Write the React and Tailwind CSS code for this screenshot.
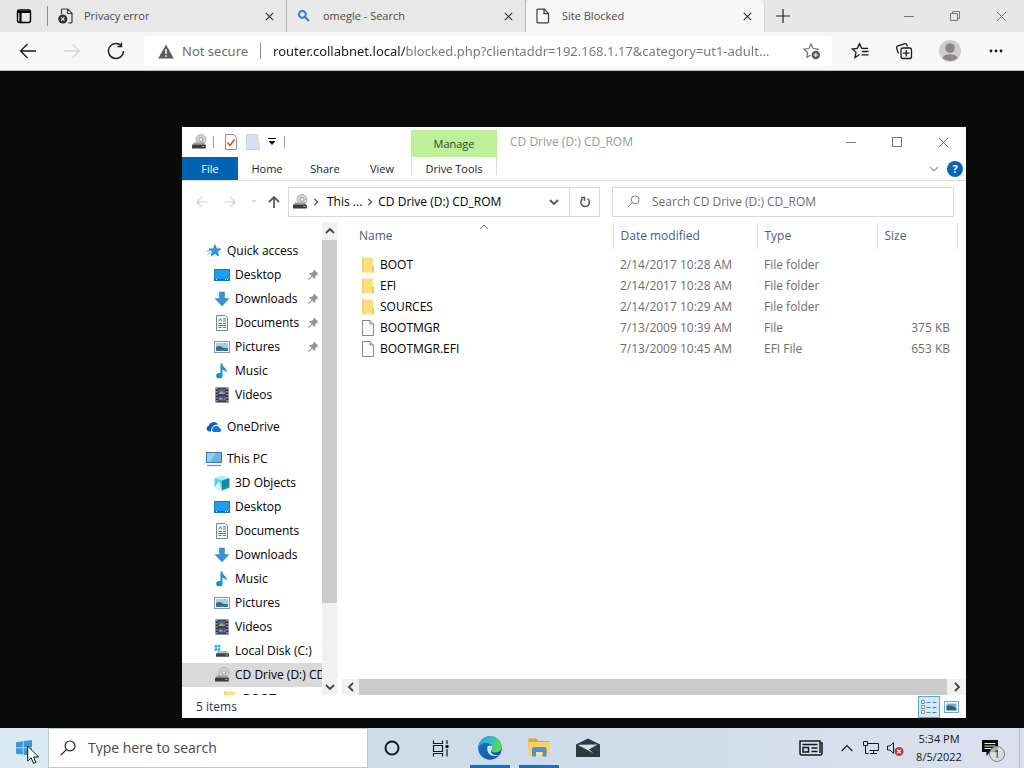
import clsx from "clsx";

/* ---------- icons ---------- */

function Stroke({ size = 16, width = 1, className, children }) {
  return (
    <svg
      width={size}
      height={size}
      viewBox={`0 0 ${size} ${size}`}
      fill="none"
      stroke="currentColor"
      strokeWidth={width}
      className={clsx("shrink-0", className)}
      aria-hidden="true"
    >
      {children}
    </svg>
  );
}

function CloseIcon({ size = 10, width = 1 }) {
  return (
    <Stroke size={size} width={width}>
      <path d={`M.8 .8 L${size - 0.8} ${size - 0.8} M${size - 0.8} .8 L.8 ${size - 0.8}`} />
    </Stroke>
  );
}

function Chevron({ dir = "down", width = 1.5, className }) {
  const paths = {
    down: "M1 3l4 4 4-4",
    up: "M1 7l4-4 4 4",
    left: "M7 1L3 5l4 4",
    right: "M3 1l4 4-4 4",
  };
  return (
    <Stroke size={10} width={width} className={className}>
      <path d={paths[dir]} />
    </Stroke>
  );
}

function PageIcon() {
  return (
    <Stroke size={16} width={1.2} className="text-[#3b3b3b]">
      <path d="M2 1.2h6.3l4.200 4.200v8.400a1 1 0 0 1-1 1H2a1 1 0 0 1-1-1V2.200a1 1 0 0 1 1-1zM8 1.200v4.500h4.500" />
    </Stroke>
  );
}

function ErrorPageIcon() {
  return (
    <Stroke size={16} width={1.2} className="text-[#3b3b3b]">
      <path d="M3.5 6V2a1 1 0 0 1 1-1h5.3L14 5.2v8.6a1 1 0 0 1-1 1h-2.5M9.5 1v4.5H14" />
      <circle cx="4.8" cy="11" r="4.6" fill="#333" stroke="none" />
      <path d="M3.2 9.4l3.2 3.2M6.4 9.4l-3.2 3.2" stroke="#e8e8e8" />
    </Stroke>
  );
}

function BingSearchIcon() {
  return (
    <Stroke size={16} width={2} className="text-[#2f7fd0]">
      <circle cx="5.4" cy="6.4" r="3.4" />
      <path d="M8 9l4 4" />
    </Stroke>
  );
}

function DriveIcon() {
  return (
    <svg width="16" height="16" viewBox="0 0 16 16" className="shrink-0" aria-hidden="true">
      <circle cx="10" cy="5.5" r="5" fill="#d4d4d4" stroke="#a3a3a3" strokeWidth=".8" />
      <circle cx="10" cy="5.5" r="2" fill="#f5f5f5" stroke="#8d8d8d" strokeWidth=".8" />
      <path d="M3 8.5h10l1.6 2.5H1.2z" fill="#9a9a9a" />
      <rect x="1" y="10.8" width="13.8" height="3.6" rx=".5" fill="#3c3c3c" />
      <rect x="11.4" y="12" width="2" height="1" fill="#8fd08a" />
    </svg>
  );
}

function LocalDiskIcon() {
  return (
    <svg width="16" height="16" viewBox="0 0 16 16" className="shrink-0" aria-hidden="true">
      <path d="M.5 2h2.6v2.6H.5zM3.7 2h2.6v2.6H3.7zM.5 5.2h2.6v2.6H.5zM3.7 5.2h2.6v2.6H3.7z" fill="#1fb4d6" />
      <path d="M4 8h9l1.8 2.5H2.4z" fill="#b9bcbc" />
      <rect x="2" y="10.2" width="13" height="3.6" rx=".5" fill="#444" />
      <rect x="11.6" y="11.4" width="2" height="1" fill="#7be07b" />
    </svg>
  );
}

function StarIcon() {
  return (
    <svg width="16" height="16" viewBox="0 0 16 16" className="shrink-0" aria-hidden="true">
      <path d="M9 1.5l1.6 4.2 4.4.2-3.4 2.8 1.2 4.4L9 10.6l-4 2.5 1.3-4.4L3 5.9l4.4-.2z" fill="#2e9be6" stroke="#1c74b8" strokeWidth=".6" />
      <path d="M1 8.5l3-.8M1.5 11.5l3-1.8" stroke="#57aee8" strokeWidth="1" />
    </svg>
  );
}

function DesktopIcon() {
  return (
    <svg width="16" height="16" viewBox="0 0 16 16" className="shrink-0" aria-hidden="true">
      <rect x=".5" y="2.5" width="15" height="11" fill="#1e9df7" stroke="#1877bd" />
      <path d="M1 12.5h14" stroke="#1467a8" />
      <path d="M2 12.5h1M11 12.5h1M13 12.5h1" stroke="#d8efff" />
    </svg>
  );
}

function DownloadIcon() {
  return (
    <svg width="16" height="16" viewBox="0 0 16 16" className="shrink-0" aria-hidden="true">
      <path d="M5.500 1h5v6.500h4.500L8 15 1 7.500h4.500z" fill="#3b8fd2" stroke="#2f7ab8" strokeWidth=".5" />
    </svg>
  );
}

function DocumentIcon() {
  return (
    <svg width="16" height="16" viewBox="0 0 16 16" className="shrink-0" aria-hidden="true">
      <path d="M2.500 .5h8.500l2.500 2.500v12.500h-11z" fill="#fbfcfc" stroke="#75868e" />
      <path d="M4.500 6.500l2-3 1 3M9 4h3M9 6h3M4.500 8.500h3.500M9 8.500h3M4.500 10.500h7.500M4.500 12.500h3M9 12.500h3" stroke="#3a80a8" fill="none" />
    </svg>
  );
}

function PictureIcon() {
  return (
    <svg width="16" height="16" viewBox="0 0 16 16" className="shrink-0" aria-hidden="true">
      <rect x=".5" y="2.500" width="15" height="11" fill="#fff" stroke="#8a979e" />
      <rect x="2" y="4" width="12" height="8" fill="#a5cdf2" />
      <path d="M2 8q3-2 6 0t6 1v3H2z" fill="#47647c" />
      <path d="M2 10.500q6-1 12 .5v1H2z" fill="#2f7ca8" />
    </svg>
  );
}

function MusicIcon() {
  return (
    <svg width="16" height="16" viewBox="0 0 16 16" className="shrink-0" aria-hidden="true">
      <path d="M7.500 .5v12" stroke="#1a8fd4" strokeWidth="2" />
      <path d="M7.500 .5c.5 3.500 6.500 4.500 4.800 9.500-.4-2.300-2.800-3.300-4.800-3.600z" fill="#1a8fd4" />
      <ellipse cx="5.300" cy="12.700" rx="3.200" ry="2.600" fill="#1a8fd4" />
    </svg>
  );
}

function VideoIcon() {
  return (
    <svg width="16" height="16" viewBox="0 0 16 16" className="shrink-0" aria-hidden="true">
      <rect x="1.500" y=".5" width="13" height="15" fill="#2f2f33" />
      <path d="M3 1v14M13 1v14" stroke="#e5e5e5" strokeDasharray="1.500 1.500" />
      <rect x="4.500" y="1.500" width="7" height="6" fill="#55638f" />
      <rect x="4.500" y="8.500" width="7" height="6" fill="#4652a8" />
      <path d="M4.500 7l2.500-3 2 2 1-1 1.500 2zM4.500 12l2 -1.500 3 2 2-2v2h-7z" fill="#c3ad4c" />
    </svg>
  );
}

function OneDriveIcon() {
  return (
    <svg width="16" height="16" viewBox="0 0 16 16" className="shrink-0" aria-hidden="true">
      <path d="M3 12.500a3 3 0 0 1-.3-5.800A5.200 5.200 0 0 1 12 5.500c-4 .3-6 2.500-6.500 7z" fill="#0f5fb8" />
      <path d="M7 13a3 3 0 0 1 .6-5 3.800 3.800 0 0 1 6.200 1.200A2 2 0 0 1 14 13z" fill="#1278d4" />
      <path d="M5.800 12.500c-.8-3.500 1-6 4.500-6.300" stroke="#fff" strokeWidth=".9" fill="none" />
    </svg>
  );
}

function ComputerIcon() {
  return (
    <svg width="16" height="16" viewBox="0 0 16 16" className="shrink-0" aria-hidden="true">
      <rect x=".5" y="1.500" width="15" height="10" fill="#5fb8f2" stroke="#4a7898" />
      <path d="M1 2h9L4 11H1z" fill="#8fd0f8" />
      <path d="M1 14.500h14" stroke="#7d8c95" strokeWidth="1.200" />
    </svg>
  );
}

function CubeIcon() {
  return (
    <svg width="16" height="16" viewBox="0 0 16 16" className="shrink-0" aria-hidden="true">
      <path d="M.5 3L8 .5 15.500 3 8 5.500z" fill="#a8eaf2" />
      <path d="M.5 3L8 5.500v10l-7.500-3z" fill="#56cfe0" />
      <path d="M8 5.500L15.500 3v9.500l-7.500 3z" fill="#0f8fa8" />
      <path d="M.5 12.500l4.500-6.500 3 9.500z" fill="#d8f3e6" />
    </svg>
  );
}

function FolderIcon() {
  return (
    <svg width="14" height="16" viewBox="0 0 14 16" className="shrink-0" aria-hidden="true">
      <path d="M1 .5h11v15H1z" fill="#fbdf83" />
      <path d="M1 .5h1.500v15H1z" fill="#f5d06a" />
      <path d="M11 15.500V9.500l2-.8v6.800z" fill="#f2c84f" />
    </svg>
  );
}

function FileIcon() {
  return (
    <svg width="14" height="16" viewBox="0 0 14 16" className="shrink-0" aria-hidden="true">
      <path d="M1.500 .5h7.500l3.500 3.500v11.500h-11z" fill="#fdfdfd" stroke="#85898c" />
      <path d="M9 .5v3.500h3.500" fill="none" stroke="#85898c" />
    </svg>
  );
}

function PinIcon() {
  return (
    <svg width="12" height="12" viewBox="0 0 12 12" className="shrink-0" aria-hidden="true">
      <path d="M7 .5l4.500 4.500-1.600.5-1.700 1.900-.1 2.800L5.200 7.500 1.200 11.400l-.6-.6L4.500 6.800 1.800 4.100l2.900-.2 1.800-1.700z" fill="#8d9499" />
    </svg>
  );
}

function SearchIcon({ size = 14, className }) {
  return (
    <svg width={size} height={size} viewBox="0 0 14 14" fill="none" stroke="currentColor" className={className} aria-hidden="true">
      <circle cx="8.800" cy="5.200" r="4.300" />
      <path d="M5.700 8.300L.7 13.300" />
    </svg>
  );
}

function EdgeIcon() {
  return (
    <svg width="24" height="24" viewBox="0 0 24 24" aria-hidden="true">
      <defs>
        <linearGradient id="edgeTop" x1="0" y1="0" x2="1" y2="0.4">
          <stop offset="0" stopColor="#1c9bdc" />
          <stop offset=".55" stopColor="#35c1c4" />
          <stop offset="1" stopColor="#5fd45a" />
        </linearGradient>
        <linearGradient id="edgeBottom" x1="0" y1="0" x2="1" y2="1">
          <stop offset="0" stopColor="#1579cf" />
          <stop offset="1" stopColor="#114f9e" />
        </linearGradient>
      </defs>
      <circle cx="12" cy="12" r="11.800" fill="url(#edgeBottom)" />
      <path d="M.3 11.500C1 5 6 .2 12.200.2 18.500.2 23.800 5 23.800 10.800c0 3.500-2.800 5.700-6.200 5.700-3 0-4.600-1.200-3.900-2.300.5-.8.8-1.500.8-2.500C14.500 9 11.500 7 8.300 7 4.500 7 1.500 9 .3 11.500z" fill="url(#edgeTop)" />
      <path d="M9.200 12c-.3 5 3.800 8.800 9.300 7.900 1.600-.3 3-1 3.800-1.600-1.300.8-2.500 1-4 .9-4-.2-6.300-2.700-5-5 .8-1.400 1.400-2.300.9-3.600-1.700-1.700-4.800-1.200-5 1.400z" fill="#d7edf5" />
    </svg>
  );
}

function ExplorerIcon() {
  return (
    <svg width="24" height="24" viewBox="0 0 24 24" aria-hidden="true">
      <path d="M1.500 2.500h8l2 2.500H22v6H1.500z" fill="#e3a32e" />
      <path d="M1.500 6H20.500a2 2 0 0 1 2 2v12h-21z" fill="#fbd164" />
      <path d="M5 20.500v-7.500a2 2 0 0 1 2-2h10.500a2 2 0 0 1 2 2v7.500h-4V16h-6.500v4.500z" fill="#4a94c8" />
      <path d="M9 16h6.500v3H9z" fill="#fde28e" />
    </svg>
  );
}

function MailIcon() {
  return (
    <svg width="24" height="20" viewBox="0 0 24 20" aria-hidden="true">
      <path d="M0 6.500L12 .5l12 6V19H0z" fill="#2e3a42" />
      <path d="M1.500 6.800L21.500 6.500 13 11.500l4.500 3.800z" fill="#d4e0e9" />
    </svg>
  );
}

/* ---------- browser ---------- */

function BrowserTab({ title, icon, active }) {
  return (
    <div
      className={clsx(
        "flex h-8 w-[239px] min-w-0 shrink items-center border-r pl-2.5 pr-3",
        active ? "rounded-t-sm border-[#d5d5d5] bg-[#f7f7f7]" : "border-[#b5b5b5] bg-[#e8e8e8]"
      )}
    >
      <button className="flex min-w-0 flex-1 items-center gap-2.5 text-left text-[#4a4a4a]">
        {icon}
        <span className="truncate">{title}</span>
      </button>
      <button aria-label={`Close ${title}`} className="text-[#333]">
        <CloseIcon size={9} width={1.2} />
      </button>
    </div>
  );
}

function TabStrip() {
  return (
    <div className="flex h-8 items-center bg-[#e7e7e7] text-[11px]">
      <button aria-label="Tab actions" className="flex h-5 w-12 items-center justify-center border-r border-[#8d8d8d] text-black">
        <Stroke size={16} width={1.4}>
          <rect x="1.500" y="2" width="13" height="12.500" rx="2" />
          <path d="M1.500 4h13M4.500 5v9" strokeWidth="2.200" />
        </Stroke>
      </button>
      <BrowserTab title="Privacy error" icon={<ErrorPageIcon />} />
      <BrowserTab title="omegle - Search" icon={<BingSearchIcon />} />
      <BrowserTab title="Site Blocked" icon={<PageIcon />} active />
      <button aria-label="New tab" className="flex h-8 w-9 items-center justify-center text-[#222]">
        <Stroke size={14} width={1.2}>
          <path d="M7 0v14M0 7h14" />
        </Stroke>
      </button>
      <div className="ml-auto flex text-[#777]">
        <button aria-label="Minimize browser" className="flex h-7 w-[46px] items-center justify-center">
          <Stroke size={10}>
            <path d="M0 5.500h10" />
          </Stroke>
        </button>
        <button aria-label="Restore browser" className="flex h-7 w-[46px] items-center justify-center">
          <Stroke size={10}>
            <path d="M.5 2.500h7v7h-7zM2.500 2.500v-2h7v7h-2" />
          </Stroke>
        </button>
        <button aria-label="Close browser" className="flex h-7 w-[46px] items-center justify-center">
          <CloseIcon size={11} />
        </button>
      </div>
    </div>
  );
}

function ToolButton({ label, className, children }) {
  return (
    <button aria-label={label} className={clsx("flex h-8 w-11 shrink-0 items-center justify-center", className)}>
      {children}
    </button>
  );
}

function Toolbar() {
  return (
    <div className="flex h-[39px] items-center border-b border-[#bdbdbd] bg-[#f7f7f7] px-1.5 text-[#1b1b1b]">
      <ToolButton label="Back">
        <Stroke size={18} width={1.3}>
          <path d="M17 9H1.500M8.500 2l-7 7 7 7" />
        </Stroke>
      </ToolButton>
      <ToolButton label="Forward" className="text-[#d3d3d3]">
        <Stroke size={18} width={1.3}>
          <path d="M1 9h15.500M9.500 2l7 7-7 7" />
        </Stroke>
      </ToolButton>
      <ToolButton label="Refresh">
        <Stroke size={18} width={1.4}>
          <path d="M16.500 9a7.500 7.500 0 1 1-2.600-5.700M14.500 .5v4h-4" />
        </Stroke>
      </ToolButton>
      <div className="mx-1.5 flex h-[30px] min-w-0 flex-1 items-center rounded bg-white pl-3.5 font-['Noto_Sans','Open_Sans',sans-serif] text-[13px]">
        <svg width="16" height="15" viewBox="0 0 16 15" className="shrink-0" aria-hidden="true">
          <path d="M8 .5l7.800 14H.2z" fill="#5c5c5c" />
          <path d="M8 5v5M8 11.300v1.500" stroke="#fff" strokeWidth="1.500" />
        </svg>
        <button className="ml-2 shrink-0 text-[#6b6b6b]">Not secure</button>
        <span className="ml-3 h-4 w-px shrink-0 bg-[#8b8b8b]" />
        <input
          aria-label="Address bar"
          readOnly
          value="router.collabnet.local/blocked.php?clientaddr=192.168.1.17&category=ut1-adult..."
          className="ml-3 min-w-0 flex-1 bg-[linear-gradient(90deg,#1b1b1b_132px,#757575_132px)] bg-clip-text text-transparent outline-none"
        />
        <button aria-label="Add to favorites" className="flex w-10 shrink-0 items-center justify-center text-[#666]">
          <Stroke size={18} width={1.1}>
            <path d="M7.500 13.200L3.800 15.300l.8-4.800L1 7.200l4.900-.7L8 2l2.200 4.500 4.800.7-1 1" />
            <circle cx="12.800" cy="13" r="4.200" fill="#555" stroke="none" />
            <path d="M12.800 10.700v4.600M10.500 13h4.600" stroke="#fff" />
          </Stroke>
        </button>
      </div>
      <ToolButton label="Favorites">
        <Stroke size={18} width={1.3}>
          <path d="M8.500 12.500L4 15.500l1-5.300L1.200 7l5-.7L8.500 1.700l2.300 4.600H17M11 9.500h6.500M10.500 12.800h7" />
        </Stroke>
      </ToolButton>
      <ToolButton label="Collections">
        <Stroke size={18} width={1.3}>
          <path d="M3.500 11.500L1.700 6.500a2 2 0 0 1 1.200-2.600L9.500 1.800a2 2 0 0 1 2.500 1.200l.5 1.500" />
          <rect x="6" y="6" width="10.500" height="10.500" rx="2" />
          <path d="M11.200 8v6.500M8 11.200h6.500" />
        </Stroke>
      </ToolButton>
      <ToolButton label="Profile" className="mx-0.5">
        <svg width="22" height="22" viewBox="0 0 22 22" aria-hidden="true">
          <circle cx="11" cy="11" r="11" fill="#d0cecb" />
          <circle cx="11" cy="8" r="4.800" fill="#8a8785" />
          <path d="M3.500 18a7.600 4.600 0 0 1 15 0 11 11 0 0 1-15 0z" fill="#8a8785" />
        </svg>
      </ToolButton>
      <ToolButton label="Settings and more">
        <svg width="14" height="4" viewBox="0 0 14 4" fill="currentColor" aria-hidden="true">
          <circle cx="2" cy="2" r="1.400" />
          <circle cx="7" cy="2" r="1.400" />
          <circle cx="12" cy="2" r="1.400" />
        </svg>
      </ToolButton>
    </div>
  );
}

/* ---------- file explorer ---------- */

const quickAccess = [
  { name: "Desktop", icon: <DesktopIcon />, pinned: true },
  { name: "Downloads", icon: <DownloadIcon />, pinned: true },
  { name: "Documents", icon: <DocumentIcon />, pinned: true },
  { name: "Pictures", icon: <PictureIcon />, pinned: true },
  { name: "Music", icon: <MusicIcon /> },
  { name: "Videos", icon: <VideoIcon /> },
];

const thisPc = [
  { name: "3D Objects", icon: <CubeIcon /> },
  { name: "Desktop", icon: <DesktopIcon /> },
  { name: "Documents", icon: <DocumentIcon /> },
  { name: "Downloads", icon: <DownloadIcon /> },
  { name: "Music", icon: <MusicIcon /> },
  { name: "Pictures", icon: <PictureIcon /> },
  { name: "Videos", icon: <VideoIcon /> },
  { name: "Local Disk (C:)", icon: <LocalDiskIcon /> },
  { name: "CD Drive (D:) CD_ROM", icon: <DriveIcon />, selected: true },
];

const files = [
  { name: "BOOT", date: "2/14/2017 10:28 AM", type: "File folder", size: "" },
  { name: "EFI", date: "2/14/2017 10:28 AM", type: "File folder", size: "" },
  { name: "SOURCES", date: "2/14/2017 10:29 AM", type: "File folder", size: "" },
  { name: "BOOTMGR", date: "7/13/2009 10:39 AM", type: "File", size: "375 KB" },
  { name: "BOOTMGR.EFI", date: "7/13/2009 10:45 AM", type: "EFI File", size: "653 KB" },
];

function TitleAndRibbon() {
  return (
    <div className="flex h-[54px] shrink-0 border-b border-[#dcdcdc]">
      <div className="flex w-[229px] shrink-0 flex-col">
        <div className="flex h-[30px] items-center pl-[9px]">
          <DriveIcon />
          <span className="ml-1.5 h-3 w-px bg-[#9a9a9a]" />
          <button aria-label="Properties" className="ml-2.5">
            <svg width="14" height="16" viewBox="0 0 14 16" aria-hidden="true">
              <path d="M1.500 .5h8l3 3v12h-11z" fill="#fff" stroke="#8e8e8e" />
              <path d="M3.500 8.500l2.500 3 4.500-6" fill="none" stroke="#e0472f" strokeWidth="1.600" />
            </svg>
          </button>
          <button aria-label="New folder" className="ml-2">
            <svg width="14" height="16" viewBox="0 0 14 16" aria-hidden="true">
              <path d="M.5 .5h11.500v9h1.200v6H.5z" fill="#d9dff0" stroke="#ccd2e6" />
            </svg>
          </button>
          <button aria-label="Customize toolbar" className="ml-2">
            <svg width="8" height="8" viewBox="0 0 8 8" aria-hidden="true">
              <path d="M0 .5h8" stroke="#111" />
              <path d="M.5 3h7L4 7z" fill="#111" />
            </svg>
          </button>
          <span className="ml-2 h-3 w-px bg-[#9a9a9a]" />
        </div>
        <div className="flex h-[23px] text-[11px]">
          <button className="w-14 bg-[#0063b1] text-white">File</button>
          <button className="w-[58px]">Home</button>
          <button className="w-[58px]">Share</button>
          <button className="w-14">View</button>
        </div>
      </div>
      <div className="mt-[3px] flex w-[86px] shrink-0 flex-col text-[11px]">
        <div className="flex h-[27px] items-center justify-center bg-[#bdf098] text-[#33472a]">Manage</div>
        <button className="h-[18px] border-x border-[#d9d9d9] pt-1 leading-4">Drive Tools</button>
      </div>
      <div className="flex min-w-0 flex-1 flex-col">
        <div className="flex h-[30px] items-center pl-[13px] text-[#999]">
          <h1 className="min-w-0 flex-1 truncate">CD Drive (D:) CD_ROM</h1>
          <button aria-label="Minimize" className="flex h-7 w-[46px] items-center justify-center text-[#777]">
            <Stroke size={10}>
              <path d="M0 5.500h10" />
            </Stroke>
          </button>
          <button aria-label="Maximize" className="flex h-7 w-[46px] items-center justify-center text-[#777]">
            <Stroke size={10}>
              <rect x=".5" y=".5" width="9" height="9" />
            </Stroke>
          </button>
          <button aria-label="Close" className="flex h-7 w-[46px] items-center justify-center text-[#777]">
            <CloseIcon size={11} />
          </button>
        </div>
        <div className="flex h-[23px] items-center justify-end gap-2 pr-[3px]">
          <button aria-label="Expand the ribbon" className="text-[#999]">
            <Chevron width={1.2} />
          </button>
          <button aria-label="Help" className="h-4 w-4 rounded-full bg-[#0b63b8] text-[11px] leading-4 font-bold text-white">
            ?
          </button>
        </div>
      </div>
    </div>
  );
}

function NavRow() {
  return (
    <div className="flex h-[41px] shrink-0 items-center pl-3 pr-3 text-[#d0d0d0]">
      <button aria-label="Back" className="p-px">
        <Stroke size={14} width={1.2}>
          <path d="M13 7H2M6.500 2.500L2 7l4.500 4.500" />
        </Stroke>
      </button>
      <button aria-label="Forward" className="ml-3 p-px">
        <Stroke size={14} width={1.2}>
          <path d="M1 7h11M7.500 2.500L12 7l-4.500 4.500" />
        </Stroke>
      </button>
      <button aria-label="Recent locations" className="ml-3">
        <svg width="8" height="4" viewBox="0 0 8 4" aria-hidden="true">
          <path d="M1 0h6L4 3z" fill="#dedede" />
        </svg>
      </button>
      <button aria-label="Up" className="ml-2 p-px text-[#5b5b5b]">
        <Stroke size={14} width={1.8}>
          <path d="M7 13V2M2 7l5-5 5 5" />
        </Stroke>
      </button>
      <div className="ml-1.5 flex h-[30px] w-[312px] shrink-0 items-center border border-[#d9d9d9] pl-[3px] text-black">
        <DriveIcon />
        <Chevron dir="right" width={1.5} className="ml-1 h-2 w-2 text-[#444]" />
        <button className="ml-[7px]">This ...</button>
        <Chevron dir="right" width={1.5} className="mx-1 h-2 w-2 text-[#444]" />
        <button>CD Drive (D:) CD_ROM</button>
        <button aria-label="Previous locations" className="ml-auto mr-2.5 text-[#555]">
          <Chevron width={1.8} />
        </button>
        <button aria-label="Refresh" className="flex h-full w-[30px] items-center justify-center border-l border-[#d9d9d9] text-[#555]">
          <Stroke size={12} width={1.5}>
            <path d="M3.500 2.800A4.300 4.300 0 1 0 8.500 2.600M2 1.500h3.500V5" />
          </Stroke>
        </button>
      </div>
      <label className="ml-3 flex h-[30px] min-w-0 flex-1 items-center border border-[#d9d9d9] pl-3.5 text-[#777]">
        <SearchIcon size={13} className="shrink-0" />
        <input
          type="text"
          aria-label="Search CD Drive"
          placeholder="Search CD Drive (D:) CD_ROM"
          className="ml-3 min-w-0 flex-1 outline-none placeholder:text-[#6d6d6d]"
        />
      </label>
    </div>
  );
}

function TreeItem({ icon, name, pinned, selected, root }) {
  return (
    <li>
      <a
        href="#"
        className={clsx(
          "flex h-6 items-center gap-[5px] whitespace-nowrap",
          root ? "pl-6" : "pl-8",
          selected && "bg-[#d9d9d9]"
        )}
      >
        {icon}
        <span className="min-w-0 flex-1 overflow-hidden">{name}</span>
        {pinned && (
          <span className="pr-[3px]">
            <PinIcon />
          </span>
        )}
      </a>
    </li>
  );
}

function Tree() {
  return (
    <nav aria-label="Folders" className="min-h-0 w-[140px] shrink-0 overflow-hidden pt-[17px] text-black">
      <ul>
        <TreeItem root icon={<StarIcon />} name="Quick access" />
        {quickAccess.map((item) => (
          <TreeItem key={item.name} {...item} />
        ))}
      </ul>
      <ul className="mt-2">
        <TreeItem root icon={<OneDriveIcon />} name="OneDrive" />
      </ul>
      <ul className="mt-2">
        <TreeItem root icon={<ComputerIcon />} name="This PC" />
        {thisPc.map((item) => (
          <TreeItem key={item.name} {...item} />
        ))}
        <li>
          <a href="#" className="flex h-6 items-center gap-1.5 pl-[41px]">
            <FolderIcon />
            BOOT
          </a>
        </li>
      </ul>
    </nav>
  );
}

function VerticalScrollbar() {
  return (
    <div className="flex w-4 shrink-0 flex-col border-r border-[#fafafa] bg-[#f1f1f1] text-[#444]">
      <button aria-label="Scroll up" className="flex h-[18px] items-center justify-center">
        <Chevron dir="up" width={1.800} />
      </button>
      <div className="flex-[363] bg-[#cbcbcb]" />
      <div className="flex-[76]" />
      <button aria-label="Scroll down" className="flex h-4 items-center justify-center">
        <Chevron dir="down" width={1.800} />
      </button>
    </div>
  );
}

function HorizontalScrollbar() {
  return (
    <div className="ml-1 flex h-4 shrink-0 bg-[#f1f1f1] text-[#444]">
      <button aria-label="Scroll left" className="flex w-[17px] items-center justify-center">
        <Chevron dir="left" width={1.800} />
      </button>
      <div className="flex-1 bg-[#cbcbcb]" />
      <button aria-label="Scroll right" className="flex w-[19px] items-center justify-center">
        <Chevron dir="right" width={1.800} />
      </button>
    </div>
  );
}

function FileTable() {
  return (
    <table className="w-full table-fixed text-left text-[#6d6d6d]">
      <colgroup>
        <col />
        <col className="w-36" />
        <col className="w-[120px]" />
        <col className="w-20" />
        <col className="w-[9px]" />
      </colgroup>
      <thead>
        <tr className="h-7 text-[#4c607a] [&>th]:font-normal">
          <th className="relative border-r border-[#e5e5e5] pl-[21px]">
            Name
            <Chevron dir="up" width={1} className="absolute top-0 left-[141px] text-[#666]" />
          </th>
          <th className="border-r border-[#e5e5e5] pl-[7px]">Date modified</th>
          <th className="border-r border-[#e5e5e5] pl-[7px]">Type</th>
          <th className="border-r border-[#e5e5e5] pl-[7px]">Size</th>
          <th aria-hidden="true" />
        </tr>
        <tr className="h-1" aria-hidden="true" />
      </thead>
      <tbody>
        {files.map((file) => (
          <tr key={file.name} className="h-[21px]">
            <td className="pl-[23px]">
              <a href="#" className="flex items-center gap-[5px] text-black">
                {file.size ? <FileIcon /> : <FolderIcon />}
                {file.name}
              </a>
            </td>
            <td className="pl-[7px]">{file.date}</td>
            <td className="pl-[7px]">{file.type}</td>
            <td className="pr-[7px] text-right">{file.size}</td>
            <td />
          </tr>
        ))}
      </tbody>
    </table>
  );
}

function StatusBar() {
  return (
    <footer className="flex h-[23px] shrink-0 items-center pl-3.5 pr-[7px] text-[#1e3350]">
      <span>5 items</span>
      <button aria-label="Details view" className="ml-auto flex h-[22px] w-[22px] items-center justify-center border border-[#55a9d6] bg-[#cdebfa]">
        <svg width="16" height="14" viewBox="0 0 16 14" fill="none" aria-hidden="true">
          <path d="M.5 .5h3v3h-3zM.5 5.500h3v3h-3zM.5 10.500h3v3h-3z" fill="#fff" stroke="#8a8a8a" />
          <path d="M5.500 2.500h4M11.500 2.500h4M5.500 7.500h4M11.500 7.500h4M5.500 12.500h4M11.500 12.500h4" stroke="#6b7f8a" />
        </svg>
      </button>
      <button aria-label="Thumbnail view" className="ml-1">
        <svg width="15" height="12" viewBox="0 0 15 12" aria-hidden="true">
          <rect x=".5" y=".5" width="14" height="11" fill="#fff" stroke="#6fa7c4" />
          <rect x="2.500" y="2.500" width="10" height="5" fill="#7aa7dd" />
          <path d="M2.500 5q5-1.500 10 2.500v2h-10z" fill="#2f5f6c" />
        </svg>
      </button>
    </footer>
  );
}

function ExplorerWindow() {
  return (
    <section
      aria-label="File Explorer"
      className="absolute top-14 right-[58px] bottom-2.5 left-[182px] flex min-h-[480px] flex-col bg-white"
    >
      <TitleAndRibbon />
      <NavRow />
      <div className="flex min-h-0 flex-1">
        <Tree />
        <VerticalScrollbar />
        <div className="flex min-w-0 flex-1 flex-col">
          <div className="min-h-0 flex-1 overflow-hidden">
            <FileTable />
          </div>
          <HorizontalScrollbar />
        </div>
      </div>
      <StatusBar />
    </section>
  );
}

/* ---------- taskbar ---------- */

function TaskButton({ label, running, children }) {
  return (
    <button
      aria-label={label}
      className={clsx(
        "flex h-10 w-10 shrink-0 items-center justify-center border-b-[3px] pt-0.5",
        running ? "border-[#0f74c8]" : "border-transparent"
      )}
    >
      {children}
    </button>
  );
}

function Taskbar() {
  return (
    <footer className="flex h-10 shrink-0 items-center bg-linear-to-r from-[#cfe1e9] via-[#cddcea] to-[#dbe0ee] text-[#16191c]">
      <button aria-label="Start" className="relative flex h-10 w-12 shrink-0 items-center justify-center bg-[#dcebf3]">
        <svg width="16" height="16" viewBox="0 0 16 16" fill="#3b96dc" aria-hidden="true">
          <path d="M0 2.200l6.800-1v6.300H0zM7.600 1.100L16 0v7.500H7.600zM0 8.300h6.800v6.300L0 13.700zM7.600 8.300H16V16l-8.400-1.200z" />
        </svg>
        <svg width="13" height="20" viewBox="0 0 13 20" className="absolute top-[17px] left-[27px]" aria-hidden="true">
          <path d="M.7 1v15l3.500-3.200 2.300 5.500 2.400-1-2.300-5.300h5z" fill="#fff" stroke="#111" />
        </svg>
      </button>
      <label className="flex h-10 w-80 items-center border border-[#bcc7cc] bg-white pl-[11px]">
        <SearchIcon size={16} className="shrink-0 text-[#1a1a1a]" />
        <input
          type="text"
          aria-label="Type here to search"
          placeholder="Type here to search"
          className="ml-3 min-w-0 flex-1 text-[14px] outline-none placeholder:text-[#474747]"
        />
      </label>
      <div className="ml-1 flex gap-[9px]">
        <TaskButton label="Cortana">
          <Stroke size={18} width={2}>
            <circle cx="9" cy="9" r="6.500" />
          </Stroke>
        </TaskButton>
        <TaskButton label="Task view">
          <Stroke size={18} width={1.2}>
            <path d="M1.500 1.500v3h9v-3M1.500 6.500h9v6h-9zM1.500 17.500v-3h9v3M15 1v4M15 10v7.500" />
            <rect x="13.500" y="6" width="3" height="3" fill="currentColor" stroke="none" />
          </Stroke>
        </TaskButton>
        <TaskButton label="Microsoft Edge" running>
          <EdgeIcon />
        </TaskButton>
        <TaskButton label="File Explorer" running>
          <ExplorerIcon />
        </TaskButton>
        <TaskButton label="Mail">
          <MailIcon />
        </TaskButton>
      </div>
      <div className="ml-auto flex shrink-0 items-center">
        <button aria-label="News and interests">
          <svg width="24" height="16" viewBox="0 0 24 16" fill="none" stroke="currentColor" strokeWidth="1.500" aria-hidden="true">
            <path d="M21 3h2v10a2 2 0 0 1-2 2H3a2 2 0 0 1-2-2V1h20v12M3.500 4.500h15M12.500 8h6M12.500 11.500h6" />
            <rect x="4" y="7.500" width="5.500" height="4.500" />
          </svg>
        </button>
        <button aria-label="Show hidden icons" className="ml-[18px]">
          <svg width="12" height="8" viewBox="0 0 12 8" fill="none" stroke="currentColor" strokeWidth="1.200" aria-hidden="true">
            <path d="M.7 7L6 1.500 11.300 7" />
          </svg>
        </button>
        <button aria-label="Network" className="ml-2.5">
          <Stroke size={16}>
            <path d="M4.500 3.500h11v7h-9M10.500 10.500v3M7 13.500h7M.5 1.500h4v4h-4zM2.500 5.500v8h3" />
          </Stroke>
        </button>
        <button aria-label="Volume muted" className="ml-2">
          <Stroke size={17}>
            <path d="M.5 6h2.500l3.500-3.500v11L3 10H.5z" />
            <circle cx="12" cy="11.500" r="4.500" fill="#d32f3a" stroke="none" />
            <path d="M10.300 9.800l3.400 3.400M13.700 9.800l-3.400 3.400" stroke="#fff" strokeWidth="1.300" />
          </Stroke>
        </button>
        <button className="ml-2 w-[54px] text-center text-[11px] leading-[18px] whitespace-nowrap">
          5:34 PM
          <br />
          8/5/2022
        </button>
        <button aria-label="Notifications" className="relative ml-4">
          <svg width="17" height="17" viewBox="0 0 17 17" aria-hidden="true">
            <path d="M0 0h16v12H8l-3.500 4v-4H0z" fill="#0c0c0c" />
            <path d="M2.500 3.500h11M2.500 6h11M2.500 8.500h7" stroke="#dfe6ef" />
          </svg>
          <span className="absolute top-1.5 left-[7px] flex h-4 w-4 items-center justify-center rounded-full border border-[#7e8388] bg-[#d4dbe4]/80 text-[11px]">
            1
          </span>
        </button>
        <button aria-label="Show desktop" className="ml-5 h-10 w-[5px] border-l border-[#b3bac6]" />
      </div>
    </footer>
  );
}

export default function App() {
  return (
    <div className="flex min-h-screen flex-col bg-[#0a0a0a] font-['Open_Sans','Noto_Sans',sans-serif] text-[12px] leading-4 text-[#222]">
      <header className="shrink-0">
        <TabStrip />
        <Toolbar />
      </header>
      <main className="relative min-h-[550px] flex-1">
        <ExplorerWindow />
      </main>
      <Taskbar />
    </div>
  );
}
